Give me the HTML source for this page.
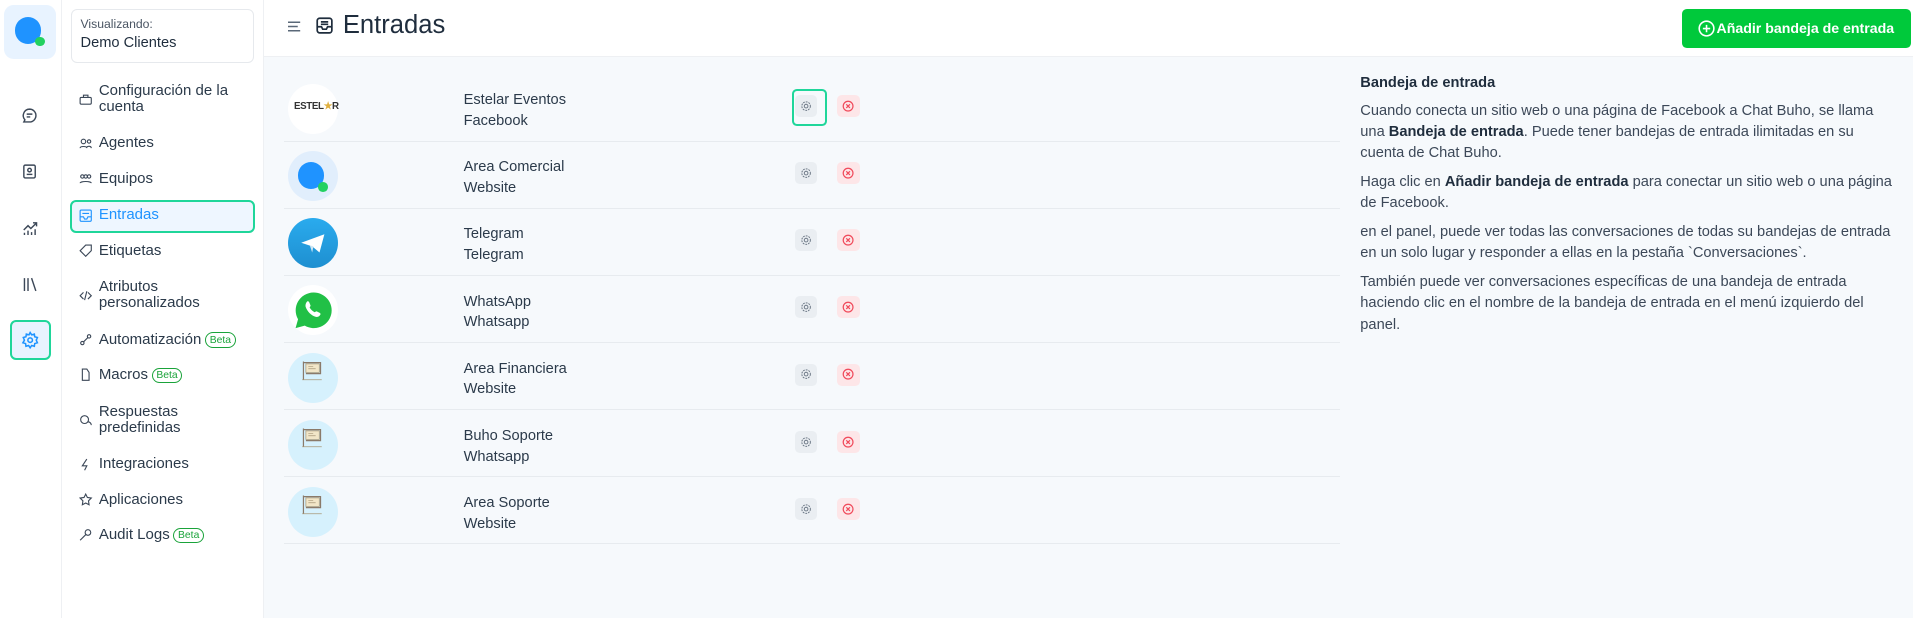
<!DOCTYPE html>
<html><head><meta charset="utf-8"><style>
*{box-sizing:border-box;margin:0;padding:0}
html,body{width:1913px;height:618px;overflow:hidden;background:#fff;font-family:"Liberation Sans",sans-serif;color:#1f2d3d}
#w{zoom:1.22;width:1568px;height:507px;position:relative}
.abs{position:absolute}
.rail{left:0;top:0;width:51px;height:507px;border-right:1px solid #eef0f3;background:#fff}
.side{left:51px;top:0;width:165px;height:507px;border-right:1px solid #eef0f3;background:#fff}
.mi{position:absolute;left:81px;font-size:12.3px;color:#2b3a4a;line-height:13px}
.ic{position:absolute;left:65px;width:11px;height:11px}
.beta{display:inline-block;border:1px solid #1aa33a;color:#1aa33a;font-size:8.5px;border-radius:7px;padding:1px 3px;line-height:9px;margin-left:3px;vertical-align:1px}
.main{left:216px;top:0;width:1352px;height:507px;background:#f6f9fc}
.hdr{left:216px;top:0;width:1352px;height:47px;background:#fff;border-bottom:1px solid #eef0f3}
.row{position:absolute;left:233px;width:865px;height:55px;border-bottom:1px solid #e7ebef}
.av{position:absolute;left:3px;top:8px;width:41px;height:41px;border-radius:50%}
.nm{position:absolute;left:147px;top:13px;font-size:12px;color:#2b3a4a;line-height:17px}
.sb{position:absolute;left:419px;top:17px;width:18px;height:18px;border-radius:4px;background:#eaeef2}
.db{position:absolute;left:453px;top:17px;width:19px;height:18px;border-radius:4px;background:#fde6e8}
.rp{left:1115px;width:450px;font-size:12px;line-height:17.5px;color:#3c4858;white-space:nowrap}
.rp p{margin-bottom:6px}
</style></head><body><div id="w">
<div class="abs rail"></div>
<div class="abs" style="left:3px;top:4px;width:43px;height:44px;background:#e8f3ff;border-radius:8px"></div>
<div class="abs" style="left:12px;top:14px;width:22px;height:22px;border-radius:50%;background:#1f93ff"></div>
<div class="abs" style="left:29px;top:30px;width:8px;height:8px;border-radius:50%;background:#23d160"></div>
<svg class="abs" style="left:17px;top:88px" width="14" height="14" viewBox="0 0 24 24" fill="none" stroke="#3c4858" stroke-width="2"><path d="M12 3a9 9 0 0 1 0 18H4l1.5-3A9 9 0 0 1 12 3zM8 10h8M8 14h5"/></svg>
<svg class="abs" style="left:17px;top:134px" width="14" height="14" viewBox="0 0 24 24" fill="none" stroke="#3c4858" stroke-width="2"><rect x="4" y="3" width="16" height="18" rx="2"/><circle cx="12" cy="10" r="2.5"/><path d="M8 16h8"/></svg>
<svg class="abs" style="left:17px;top:180px" width="15" height="14" viewBox="0 0 24 24" fill="none" stroke="#3c4858" stroke-width="2"><path d="M3 14l6-6 4 4 8-8M16 4h5v5M4 21v-3M9 21v-6M14 21v-4M19 21v-8"/></svg>
<svg class="abs" style="left:17px;top:226px" width="15" height="14" viewBox="0 0 24 24" fill="none" stroke="#3c4858" stroke-width="2"><path d="M4 3v18M9 3v18M14 3l6 18"/></svg>
<div class="abs" style="left:8px;top:262px;width:34px;height:33px;border:2px solid #1fd69a;border-radius:5px;background:#e8f3ff"></div>
<svg class="abs" style="left:17px;top:271px" width="15" height="15" viewBox="0 0 24 24" fill="none" stroke="#1f93ff" stroke-width="2"><circle cx="12" cy="12" r="3"/><path d="M12 2l2 3 3.5-1 .5 3.5 3.5 1-1.5 3.5 1.5 3.5-3.5 1-.5 3.5-3.5-1-2 3-2-3-3.5 1-.5-3.5-3.5-1L4.5 12 3 8.5l3.5-1L7 4l3.5 1z"/></svg>

<div class="abs side"></div>
<div class="abs" style="left:58px;top:7px;width:150px;height:45px;border:1px solid #e6e9ed;border-radius:5px"></div>
<div class="abs" style="left:66px;top:14px;font-size:10px;color:#4a5563">Visualizando:</div>
<div class="abs" style="left:66px;top:29px;font-size:12px;color:#1f2d3d">Demo Clientes</div>

<div class="abs" style="left:57px;top:164px;width:152px;height:27px;border:2px solid #1fd69a;border-radius:5px;background:#eef6ff"></div>
<div class="mi" style="top:68px">Configuración de la<br>cuenta</div>
<div class="mi" style="top:111px">Agentes</div>
<div class="mi" style="top:140px">Equipos</div>
<div class="mi" style="top:170px;color:#1f93ff">Entradas</div>
<div class="mi" style="top:199px">Etiquetas</div>
<div class="mi" style="top:229px">Atributos<br>personalizados</div>
<div class="mi" style="top:272px">Automatización<span class="beta">Beta</span></div>
<div class="mi" style="top:301px">Macros<span class="beta">Beta</span></div>
<div class="mi" style="top:331px">Respuestas<br>predefinidas</div>
<div class="mi" style="top:374px">Integraciones</div>
<div class="mi" style="top:403px">Aplicaciones</div>
<div class="mi" style="top:432px">Audit Logs<span class="beta">Beta</span></div>
<svg class="ic" style="top:76px" viewBox="0 0 12 12" fill="none" stroke="#3c4858"><rect x="1" y="4" width="10" height="6" rx="1"/><path d="M4 4V2h4v2"/></svg>
<svg class="ic" style="top:112px" viewBox="0 0 12 12" fill="none" stroke="#3c4858"><circle cx="4" cy="4" r="2"/><circle cx="9" cy="4" r="1.5"/><path d="M1 10c0-2 6-2 6 0M7 9c1-1 4-1 4 1"/></svg>
<svg class="ic" style="top:141px" viewBox="0 0 12 12" fill="none" stroke="#3c4858"><circle cx="3" cy="4" r="1.5"/><circle cx="6" cy="4" r="1.5"/><circle cx="9" cy="4" r="1.5"/><path d="M1 10c0-2 10-2 10 0"/></svg>
<svg class="ic" style="top:171px" viewBox="0 0 12 12" fill="none" stroke="#1f93ff"><rect x="1" y="1" width="10" height="10" rx="1"/><path d="M1 7h3l1 2h2l1-2h3M3 4h6"/></svg>
<svg class="ic" style="top:200px" viewBox="0 0 12 12" fill="none" stroke="#3c4858"><path d="M6 1h5v5l-5 5-5-5z"/></svg>
<svg class="ic" style="top:237px" viewBox="0 0 12 12" fill="none" stroke="#3c4858"><path d="M4 3L1 6l3 3M8 3l3 3-3 3M7 2L5 10"/></svg>
<svg class="ic" style="top:273px" viewBox="0 0 12 12" fill="none" stroke="#3c4858"><circle cx="3" cy="9" r="1.5"/><circle cx="9" cy="3" r="1.5"/><path d="M4 8l4-4"/></svg>
<svg class="ic" style="top:302px" viewBox="0 0 12 12" fill="none" stroke="#3c4858"><path d="M3 1h4l2 3v7H3z"/></svg>
<svg class="ic" style="top:339px" viewBox="0 0 12 12" fill="none" stroke="#3c4858"><circle cx="5" cy="5" r="3.5"/><path d="M8 7a3 3 0 0 1 3 3"/></svg>
<svg class="ic" style="top:375px" viewBox="0 0 12 12" fill="none" stroke="#3c4858"><path d="M7 1L3 7h4l-2 4"/></svg>
<svg class="ic" style="top:404px" viewBox="0 0 12 12" fill="none" stroke="#3c4858"><path d="M6 1l1.5 3 3.5.5-2.5 2.5.5 3.5L6 9l-3 1.5.5-3.5L1 4.5 4.5 4z"/></svg>
<svg class="ic" style="top:433px" viewBox="0 0 12 12" fill="none" stroke="#3c4858"><circle cx="8" cy="4" r="2.5"/><path d="M6 6l-5 5"/></svg>

<div class="abs main"></div>
<div class="abs hdr"></div>
<svg class="abs" style="left:236px;top:17px" width="11" height="9" viewBox="0 0 11 9" stroke="#5a6878" stroke-width="1.2"><path d="M0 1h10M0 4.5h8M0 8h10"/></svg>
<svg class="abs" style="left:259px;top:14px" width="14" height="14" viewBox="0 0 14 14" fill="none" stroke="#1f2d3d" stroke-width="1.4"><rect x="1" y="1" width="12" height="12" rx="2"/><path d="M1 8h3.5l1 2h3l1-2H13M4 4h6M4 6h6"/></svg>
<div class="abs" style="left:281px;top:9px;font-size:21px;color:#1f2d3d">Entradas</div>
<div class="abs" style="left:1379px;top:7px;width:187px;height:32px;background:#00c93b;border-radius:4px;color:#fff;font-size:11.6px;font-weight:bold;line-height:32px;padding-left:28px">Añadir bandeja de entrada</div>
<svg class="abs" style="left:1392px;top:16px" width="14" height="14" viewBox="0 0 14 14" fill="none" stroke="#fff" stroke-width="1.3"><circle cx="7" cy="7" r="6"/><path d="M7 4v6M4 7h6"/></svg>

<div class="row" style="top:61px">
 <div class="av" style="background:#fff"><div style="position:absolute;left:5px;top:14px;font-size:8px;font-weight:bold;color:#333;letter-spacing:-.3px">ESTEL<span style="color:#e0b040">★</span>R</div></div>
 <div class="nm">Estelar Eventos<br>Facebook</div>
 <div style="position:absolute;left:416px;top:12px;width:29px;height:30px;border:2px solid #1fd69a;border-radius:4px"></div>
 <div class="sb"></div><div class="db"></div>
</div>
<div class="row" style="top:116px">
 <div class="av" style="background:#e1eefc"><div style="position:absolute;left:8px;top:9px;width:22px;height:22px;border-radius:50%;background:#1f93ff"></div><div style="position:absolute;left:25px;top:25px;width:8px;height:8px;border-radius:50%;background:#23d160"></div></div>
 <div class="nm">Area Comercial<br>Website</div><div class="sb"></div><div class="db"></div>
</div>
<div class="row" style="top:171px">
 <div class="av" style="background:linear-gradient(#2aabee,#1e8fd0)"><svg style="position:absolute;left:10px;top:12px" width="21" height="17" viewBox="0 0 21 17"><path d="M1 8L20 1 16 16 10 11z" fill="#fff"/><path d="M8 10l2 6 1-5z" fill="#cfe6f3"/></svg></div>
 <div class="nm">Telegram<br>Telegram</div><div class="sb"></div><div class="db"></div>
</div>
<div class="row" style="top:226px">
 <div class="av" style="background:#fff"><svg style="position:absolute;left:3px;top:3px" width="35" height="35" viewBox="0 0 24 24"><path d="M12 2a10 10 0 0 0-8.6 15L2 22l5.2-1.4A10 10 0 1 0 12 2z" fill="#21c046"/><path d="M8.5 7c.4-.3 1 0 1.2.5l.7 1.7c.1.4-.2.8-.5 1.1.6 1.2 1.7 2.2 2.9 2.8.3-.3.7-.7 1.1-.5l1.7.8c.4.2.6.7.3 1.1-.5 1-1.6 1.5-2.7 1.1-2.6-.9-4.6-3-5.5-5.5-.3-1.1.1-2.3.8-3.1z" fill="#fff"/></svg></div>
 <div class="nm">WhatsApp<br>Whatsapp</div><div class="sb"></div><div class="db"></div>
</div>
<div class="row" style="top:281px"><div class="av" style="background:#d6f1fd"></div><div class="nm">Area Financiera<br>Website</div><div class="sb"></div><div class="db"></div></div>
<div class="row" style="top:336px"><div class="av" style="background:#d6f1fd"></div><div class="nm">Buho Soporte<br>Whatsapp</div><div class="sb"></div><div class="db"></div></div>
<div class="row" style="top:391px"><div class="av" style="background:#d6f1fd"></div><div class="nm">Area Soporte<br>Website</div><div class="sb"></div><div class="db"></div></div>

<svg width="0" height="0" style="position:absolute"><defs>
<g id="sg"><circle cx="5" cy="5" r="1.5" fill="none" stroke="#6b7785" stroke-width=".8"/><circle cx="5" cy="5" r="3.5" fill="none" stroke="#6b7785" stroke-width=".8" stroke-dasharray="1.5 .8"/></g>
<g id="xg"><circle cx="5" cy="5" r="4" fill="none" stroke="#f04a5b" stroke-width="1"/><path d="M3.5 3.5l3 3M6.5 3.5l-3 3" stroke="#f04a5b" stroke-width="1"/></g>
<g id="bd"><path d="M2 2v15M2 3h14v9H4" fill="none" stroke="#8a7a6a" stroke-width="1"/><rect x="4" y="4" width="11" height="7" fill="#f1e6c8" stroke="#a89878" stroke-width=".6"/><path d="M6 6h4M6 8h6M1 17h16" stroke="#a89878" stroke-width=".6"/></g>
</defs></svg>
<svg class="abs" style="left:656px;top:82px" width="10" height="10"><use href="#sg"/></svg>
<svg class="abs" style="left:656px;top:137px" width="10" height="10"><use href="#sg"/></svg>
<svg class="abs" style="left:656px;top:192px" width="10" height="10"><use href="#sg"/></svg>
<svg class="abs" style="left:656px;top:247px" width="10" height="10"><use href="#sg"/></svg>
<svg class="abs" style="left:656px;top:302px" width="10" height="10"><use href="#sg"/></svg>
<svg class="abs" style="left:656px;top:357px" width="10" height="10"><use href="#sg"/></svg>
<svg class="abs" style="left:656px;top:412px" width="10" height="10"><use href="#sg"/></svg>
<svg class="abs" style="left:690px;top:82px" width="10" height="10"><use href="#xg"/></svg>
<svg class="abs" style="left:690px;top:137px" width="10" height="10"><use href="#xg"/></svg>
<svg class="abs" style="left:690px;top:192px" width="10" height="10"><use href="#xg"/></svg>
<svg class="abs" style="left:690px;top:247px" width="10" height="10"><use href="#xg"/></svg>
<svg class="abs" style="left:690px;top:302px" width="10" height="10"><use href="#xg"/></svg>
<svg class="abs" style="left:690px;top:357px" width="10" height="10"><use href="#xg"/></svg>
<svg class="abs" style="left:690px;top:412px" width="10" height="10"><use href="#xg"/></svg>
<svg class="abs" style="left:247px;top:294px" width="18" height="18"><use href="#bd"/></svg>
<svg class="abs" style="left:247px;top:349px" width="18" height="18"><use href="#bd"/></svg>
<svg class="abs" style="left:247px;top:404px" width="18" height="18"><use href="#bd"/></svg>

<div class="abs rp" style="top:60px">
<p style="font-weight:bold;color:#1f2d3d;margin-bottom:5px">Bandeja de entrada</p>
<p>Cuando conecta un sitio web o una página de Facebook a Chat Buho, se llama<br>una <b style="color:#1f2d3d">Bandeja de entrada</b>. Puede tener bandejas de entrada ilimitadas en su<br>cuenta de Chat Buho.</p>
<p>Haga clic en <b style="color:#1f2d3d">Añadir bandeja de entrada</b> para conectar un sitio web o una página<br>de Facebook.</p>
<p>en el panel, puede ver todas las conversaciones de todas su bandejas de entrada<br>en un solo lugar y responder a ellas en la pestaña `Conversaciones`.</p>
<p>También puede ver conversaciones específicas de una bandeja de entrada<br>haciendo clic en el nombre de la bandeja de entrada en el menú izquierdo del<br>panel.</p>
</div>
</div></body></html>
